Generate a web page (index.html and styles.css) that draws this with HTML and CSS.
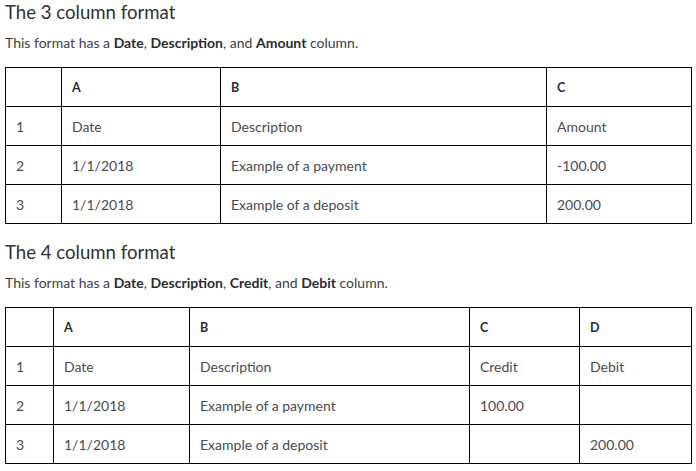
FILE: index.html
```html
<!DOCTYPE html>
<html lang="en">
<head>
<meta charset="utf-8">
<title>Column formats</title>
<link rel="stylesheet" href="styles.css">
</head>
<body>
<section class="fmt">
  <h2 class="fmt-title">The 3 column format</h2>
  <p class="fmt-desc">This format has a <b>Date</b>, <b>Description</b>, and <b>Amount</b> column.</p>
  <table class="sheet">
    <colgroup>
      <col class="t3-n"><col class="t3-a"><col class="t3-b"><col class="t3-c">
    </colgroup>
    <tr class="head"><td></td><td>A</td><td>B</td><td>C</td></tr>
    <tr><td>1</td><td>Date</td><td>Description</td><td>Amount</td></tr>
    <tr><td>2</td><td>1/1/2018</td><td>Example of a payment</td><td>-100.00</td></tr>
    <tr><td>3</td><td>1/1/2018</td><td>Example of a deposit</td><td>200.00</td></tr>
  </table>
</section>
<section class="fmt">
  <h2 class="fmt-title">The 4 column format</h2>
  <p class="fmt-desc">This format has a <b>Date</b>, <b>Description</b>, <b>Credit</b>, and <b>Debit</b> column.</p>
  <table class="sheet">
    <colgroup>
      <col class="t4-n"><col class="t4-a"><col class="t4-b"><col class="t4-c"><col class="t4-d">
    </colgroup>
    <tr class="head"><td></td><td>A</td><td>B</td><td>C</td><td>D</td></tr>
    <tr><td>1</td><td>Date</td><td>Description</td><td>Credit</td><td>Debit</td></tr>
    <tr><td>2</td><td>1/1/2018</td><td>Example of a payment</td><td>100.00</td><td></td></tr>
    <tr><td>3</td><td>1/1/2018</td><td>Example of a deposit</td><td></td><td>200.00</td></tr>
  </table>
</section>
</body>
</html>
```

FILE: styles.css
```css
html, body {
  margin: 0;
  padding: 0;
  background: #fff;
}
body {
  padding: 0 5px;
  font-family: Lato, "Open Sans", "Liberation Sans", sans-serif;
  color: #393a3d;
}
.fmt {
  padding-bottom: 16px;
}
.fmt-title {
  margin: 0;
  font-size: 18.6px;
  line-height: 24px;
  font-weight: 400;
  color: #2f3033;
}
.fmt-desc {
  margin: 9px 0 0;
  font-size: 14px;
  line-height: 20px;
  color: #404145;
}
.fmt-desc b {
  font-weight: 700;
  color: #2b2c30;
}
.sheet {
  margin-top: 14px;
  width: 686px;
  border-collapse: collapse;
  table-layout: fixed;
  font-size: 14px;
  color: #4a4b4f;
}
.sheet td {
  border: 1px solid #000;
  height: 38px;
  padding: 0 10px;
  vertical-align: middle;
  white-space: nowrap;
}
.sheet .head td {
  font-weight: 700;
  font-size: 12.5px;
  color: #2b2c30;
}
.t3-n { width: 56px; }
.t3-a { width: 159px; }
.t3-b { width: 326px; }
.t3-c { width: 145px; }
.t4-n { width: 48px; }
.t4-a { width: 136px; }
.t4-b { width: 280px; }
.t4-c { width: 110px; }
.t4-d { width: 112px; }
```
